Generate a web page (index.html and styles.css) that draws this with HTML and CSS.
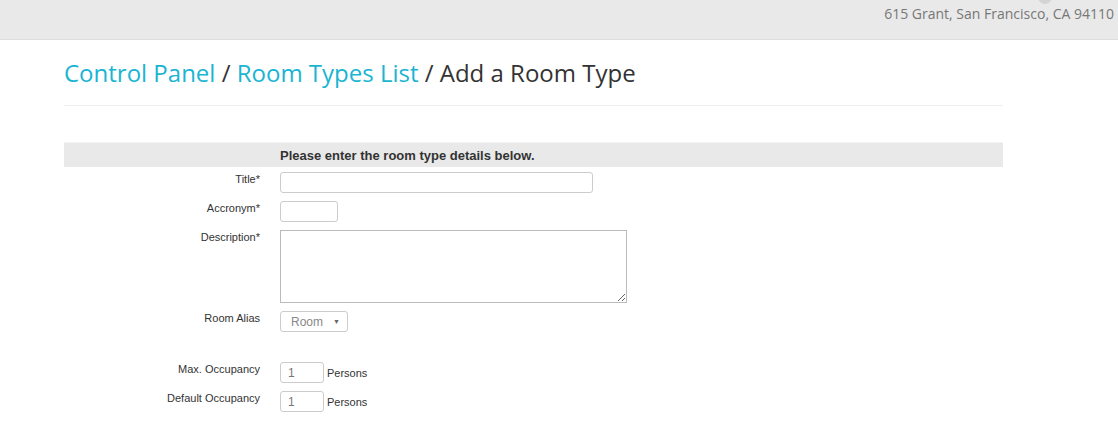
FILE: index.html
```html
<!DOCTYPE html>
<html>
<head>
<meta charset="utf-8">
<link rel="stylesheet" href="styles.css">
</head>
<body>
<header class="topbar">
  <span class="dot"></span>
  <span class="address">615 Grant, San Francisco, CA 94110</span>
</header>
<main class="container">
  <h1 class="page-title"><a href="#">Control Panel</a> / <a href="#">Room Types List</a> / Add a Room Type</h1>
  <form class="form">
    <div class="form-head">
      <span></span>
      <span class="form-head-text">Please enter the room type details below.</span>
    </div>
    <div class="row">
      <label class="label">Title*</label>
      <div class="field"><input class="input input-title" type="text"></div>
    </div>
    <div class="row">
      <label class="label">Accronym*</label>
      <div class="field"><input class="input input-acr" type="text"></div>
    </div>
    <div class="row">
      <label class="label">Description*</label>
      <div class="field"><textarea class="textarea"></textarea></div>
    </div>
    <div class="row">
      <label class="label">Room Alias</label>
      <div class="field"><div class="select"><span>Room</span><span class="arrow">▼</span></div></div>
    </div>
    <div class="row row-spaced">
      <label class="label">Max. Occupancy</label>
      <div class="field field-inline"><input class="input input-num" type="text" value="1"><span class="unit">Persons</span></div>
    </div>
    <div class="row">
      <label class="label">Default Occupancy</label>
      <div class="field field-inline"><input class="input input-num" type="text" value="1"><span class="unit">Persons</span></div>
    </div>
  </form>
</main>
</body>
</html>
```
FILE: styles.css
```css
* { box-sizing: border-box; }
html, body { margin: 0; padding: 0; background: #fff; }
body { font-family: "Liberation Sans", Arial, sans-serif; color: #333; }

.topbar {
  position: relative;
  height: 40px;
  background: #e9e9e9;
  border-bottom: 1px solid #dedede;
  display: flex;
  justify-content: flex-end;
  align-items: flex-start;
  padding: 4px 4px 0 0;
}
.address {
  font-family: "Open Sans", sans-serif;
  font-size: 14px;
  line-height: 20px;
  color: #777;
}
.dot {
  position: absolute;
  left: 1038px;
  top: -10px;
  width: 14px;
  height: 14px;
  border-radius: 50%;
  background: #d4d4d4;
}

.container {
  margin-left: 64px;
  width: 939px;
}
.page-title {
  font-family: "Open Sans", sans-serif;
  font-weight: 400;
  font-size: 24px;
  line-height: 28px;
  color: #333;
  margin: 19px 0 0;
  padding-bottom: 18px;
  border-bottom: 1px solid #eeeeee;
}
.page-title a { color: #1ab5d2; text-decoration: none; }

.form { margin-top: 36px; font-size: 11px; }
.form-head {
  display: grid;
  grid-template-columns: 196px 1fr;
  column-gap: 20px;
  background: #e9e9e9;
  border-top: 1px solid #f2f2f2;
  height: 25px;
  align-items: center;
}
.form-head-text { font-weight: bold; font-size: 13px; color: #333; }

.row {
  display: grid;
  grid-template-columns: 196px 1fr;
  column-gap: 20px;
  margin-top: 8px;
}
.form-head + .row { margin-top: 5px; }
.row-spaced { margin-top: 30px; }
.label {
  text-align: right;
  font-size: 11px;
  line-height: 14px;
  color: #333;
}
.field { display: flex; align-items: flex-start; }
.field-inline { align-items: center; }

.input {
  height: 21px;
  border: 1px solid #ccc;
  border-radius: 3px;
  padding: 0 7px;
  font-family: "Liberation Sans", Arial, sans-serif;
  font-size: 12px;
  color: #777;
  background: #fff;
  outline: none;
}
.input-title { width: 313px; }
.input-acr { width: 58px; }
.input-num { width: 44px; }
.unit { margin-left: 3px; font-size: 11px; color: #333; }

.textarea {
  width: 347px;
  height: 73px;
  border: 1px solid #bbb;
  border-radius: 0;
  margin: 0;
  display: block;
  font-family: "Liberation Sans", Arial, sans-serif;
  font-size: 12px;
}

.select {
  width: 68px;
  height: 21px;
  border: 1px solid #ccc;
  border-radius: 3px;
  display: flex;
  align-items: center;
  padding: 0 7px 0 10px;
  justify-content: space-between;
  font-size: 12px;
  color: #888;
}
.arrow { font-size: 7px; color: #666; }
```
